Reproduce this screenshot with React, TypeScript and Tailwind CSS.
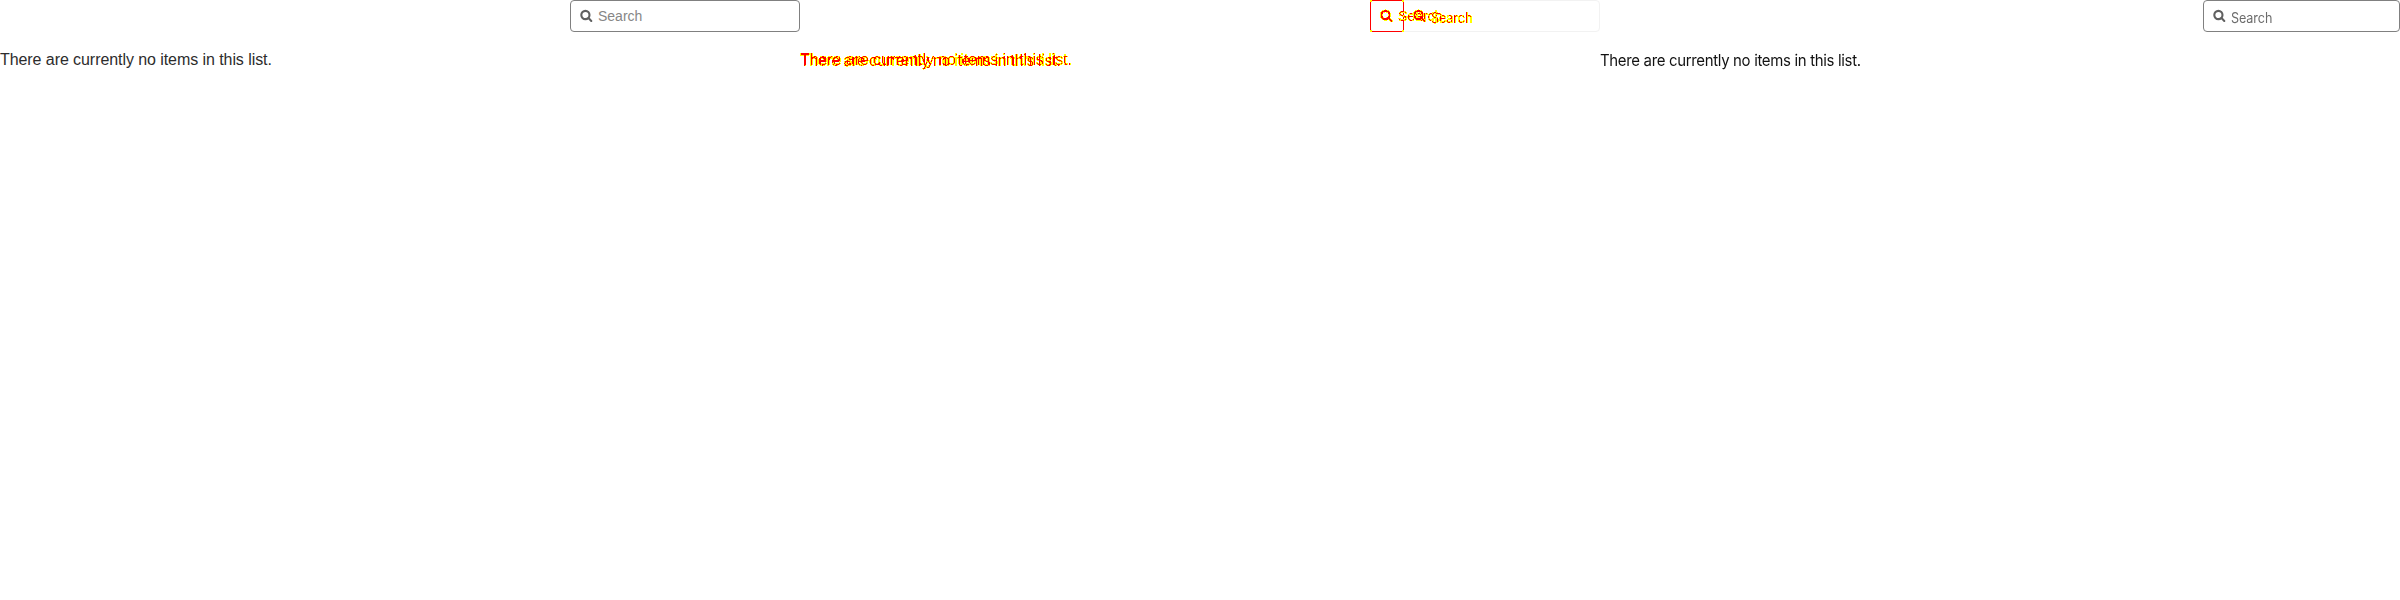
const MESSAGE = "There are currently no items in this list.";

function SearchIcon({ className }: { className: string }) {
  return (
    <svg viewBox="0 0 14 14" fill="none" stroke="currentColor" strokeWidth="2.1" strokeLinecap="round" className={className}>
      <circle cx="5.4" cy="6" r="4.1" />
      <path d="M8.5 9.1 11.3 11.9" />
    </svg>
  );
}

function Before() {
  return (
    <section className="w-[800px] font-['Liberation_Sans',sans-serif]">
      <div className="ml-auto flex h-8 w-[230px] items-center rounded-[4px] border border-[#808080] pl-[9px]">
        <SearchIcon className="size-[14px] text-[#606060]" />
        <span className="ml-1 text-sm leading-5 text-[#868686]">Search</span>
      </div>
      <p className="mt-[18px] text-base leading-5 tracking-[-0.07px] text-[#2c2c2c]">{MESSAGE}</p>
    </section>
  );
}

function After() {
  return (
    <section className="w-[800px] font-['Inter',sans-serif]">
      <div className="ml-auto flex h-8 w-[197px] items-center rounded-[4px] border border-[#808080] pl-[9px]">
        <SearchIcon className="size-[14px] text-[#606060]" />
        <span className="ml-1 origin-left scale-x-[0.9] pt-[3px] text-sm leading-5 tracking-[-0.1px] text-[#6c6c6c]">Search</span>
      </div>
      <p className="mt-[18px] origin-left scale-x-[0.935] text-base leading-5 tracking-[-0.35px] text-[#111]">{MESSAGE}</p>
    </section>
  );
}

function Difference() {
  return (
    <section className="w-[800px]">
      <svg className="absolute size-0">
        <filter id="diff" x="-5%" y="-20%" width="110%" height="140%">
          <feComponentTransfer in="SourceAlpha" result="soft">
            <feFuncA type="discrete" tableValues="0 1 1 1 1 1 1 1 1 1 1 1 1 1 1 1 1 1 1 1" />
          </feComponentTransfer>
          <feFlood floodColor="#ff0" />
          <feComposite in2="soft" operator="in" result="yellow" />
          <feComponentTransfer in="SourceAlpha" result="hard">
            <feFuncA type="discrete" tableValues="0 0 0 1" />
          </feComponentTransfer>
          <feFlood floodColor="#f00" />
          <feComposite in2="hard" operator="in" result="red" />
          <feMerge>
            <feMergeNode in="yellow" />
            <feMergeNode in="red" />
          </feMerge>
        </filter>
      </svg>
      <div className="relative ml-auto h-8 w-[230px] rounded-[4px] border border-[#f2f2f2]">
        <div className="absolute -top-px -left-px h-8 w-[34px] rounded-[2px] border border-[#f00]">
          <i className="absolute -top-px -left-px size-[2px] bg-[#ff0]" />
          <i className="absolute -top-px -right-px size-[2px] bg-[#ff0]" />
          <i className="absolute -bottom-px -left-px size-[2px] bg-[#ff0]" />
          <i className="absolute -right-px -bottom-px size-[2px] bg-[#ff0]" />
        </div>
        <div className="absolute inset-0 flex items-center pl-[9px] [filter:url(#diff)]">
          <SearchIcon className="size-[14px]" />
          <span className="ml-1 font-['Liberation_Sans',sans-serif] text-sm leading-5">Search</span>
        </div>
        <div className="absolute inset-0 flex items-center pl-[42px] [filter:url(#diff)]">
          <SearchIcon className="size-[14px]" />
          <span className="ml-1 origin-left scale-x-[0.9] pt-[3px] font-['Inter',sans-serif] text-sm leading-5 tracking-[-0.1px]">Search</span>
        </div>
      </div>
      <div className="relative mt-[18px] h-5 text-base leading-5 [filter:url(#diff)]">
        <p className="absolute inset-0 font-['Liberation_Sans',sans-serif] tracking-[-0.07px]">{MESSAGE}</p>
        <p className="absolute inset-0 origin-left scale-x-[0.935] font-['Inter',sans-serif] tracking-[-0.35px]">{MESSAGE}</p>
      </div>
    </section>
  );
}

export default function App() {
  return (
    <main className="flex h-[600px] w-[2400px] overflow-hidden bg-white">
      <Before />
      <Difference />
      <After />
    </main>
  );
}
